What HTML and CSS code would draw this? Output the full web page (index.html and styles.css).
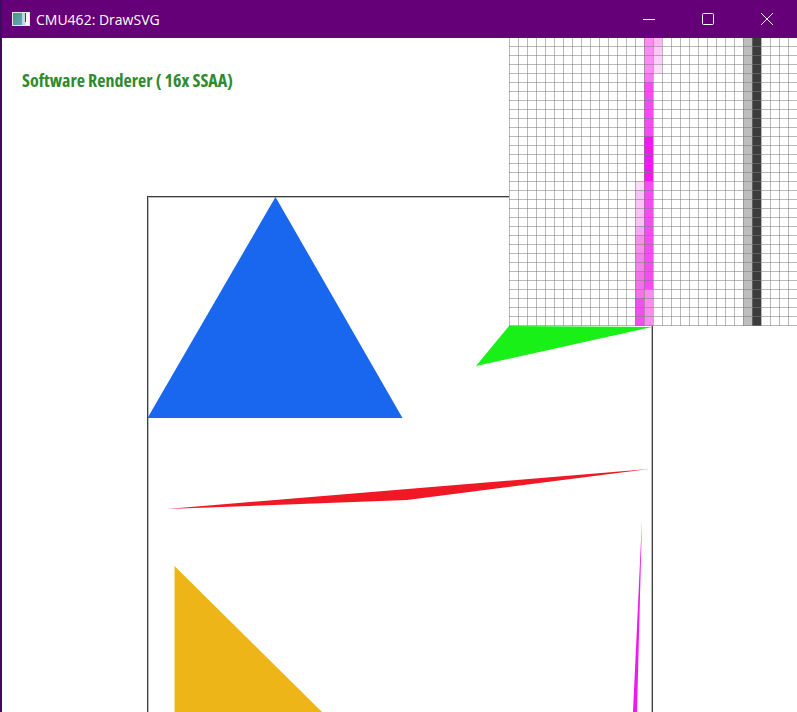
FILE: index.html
```html
<!DOCTYPE html>
<html lang="en">
<head>
<meta charset="utf-8">
<title>CMU462: DrawSVG</title>
<link rel="stylesheet" href="styles.css">
</head>
<body>
<div class="window">
  <header class="titlebar">
    <svg class="app-icon" width="18" height="14" viewBox="0 0 18 14">
      <defs>
        <linearGradient id="teal" x1="0" y1="0" x2="1" y2="1">
          <stop offset="0" stop-color="#3f9a7c"/>
          <stop offset="1" stop-color="#6aa4c4"/>
        </linearGradient>
      </defs>
      <rect x="0" y="0" width="18" height="14" fill="#e4e8ee"/>
      <rect x="1" y="1" width="9" height="12" fill="url(#teal)"/>
      <rect x="10" y="1" width="3" height="12" fill="#c4d6dc"/>
      <rect x="13" y="1" width="1" height="9" fill="#2c4c58"/>
      <rect x="14" y="1" width="3" height="12" fill="#f6f6f8"/>
    </svg>
    <span class="title">CMU462: DrawSVG</span>
    <div class="controls">
      <button class="ctl"><svg width="12" height="12" viewBox="0 0 12 12"><path d="M0 6.5H12" stroke="#fff" fill="none"/></svg></button>
      <button class="ctl"><svg width="12" height="12" viewBox="0 0 12 12"><rect x="0.5" y="0.5" width="11" height="11" rx="1" stroke="#fff" fill="none"/></svg></button>
      <button class="ctl"><svg width="12" height="12" viewBox="0 0 12 12"><path d="M0 0L12 12M12 0L0 12" stroke="#fff" fill="none"/></svg></button>
    </div>
  </header>
  <main class="canvas">
    <svg class="scene" width="795" height="674" viewBox="2 38 795 674">
      <rect x="147.5" y="196.5" width="505" height="540" fill="#fff" stroke="#3c3c3c" stroke-width="1"/>
      <rect x="148.5" y="197.5" width="503" height="538" fill="none" stroke="#bdbdbd" stroke-width="1"/>
      <polygon points="275.5,197 147.5,418 402.5,418" fill="#1967ee"/>
      <polygon points="509,326 652,327 476,366" fill="#18f018"/>
      <polygon points="167,509 649,469 407,500" fill="#f01824"/>
      <polygon points="642,519 633,712 637,712" fill="#f018ee"/>
      <polygon points="174.5,566 174.5,712 322,712" fill="#eeb518"/>
    </svg>
    <p class="label">Software Renderer ( 16x SSAA)</p>
    <div class="zoom">
      <svg class="pixels" width="288" height="288" viewBox="509 38 288 288">
        <rect x="509" y="38" width="288" height="288" fill="#fff"/>
        <rect x="743" y="38" width="9" height="288" fill="#bdbdbd"/>
        <rect x="752" y="38" width="9" height="288" fill="#3c3c3c"/>
        <rect x="653" y="37" width="9" height="9" fill="#fbb8f5"/>
        <rect x="653" y="46" width="9" height="9" fill="#fcc8f7"/>
        <rect x="653" y="55" width="9" height="9" fill="#fcd0f8"/>
        <rect x="653" y="64" width="9" height="9" fill="#fddcfb"/>
        <rect x="644" y="37" width="9" height="36" fill="#f98cf0"/>
        <rect x="644" y="73" width="9" height="9" fill="#f878ee"/>
        <rect x="644" y="82" width="9" height="54" fill="#f54cf0"/>
        <rect x="644" y="136" width="9" height="45" fill="#f018ee"/>
        <rect x="644" y="181" width="9" height="108" fill="#f54cf0"/>
        <rect x="644" y="289" width="9" height="37" fill="#f78eef"/>
        <rect x="635" y="181" width="9" height="9" fill="#fcdcf9"/>
        <rect x="635" y="190" width="9" height="36" fill="#fbc4f6"/>
        <rect x="635" y="226" width="9" height="9" fill="#fba8f3"/>
        <rect x="635" y="235" width="9" height="18" fill="#f98ef0"/>
        <rect x="635" y="253" width="9" height="18" fill="#f880ee"/>
        <rect x="635" y="271" width="9" height="27" fill="#f670ee"/>
        <rect x="635" y="298" width="9" height="28" fill="#f44cf0"/>
      </svg>
      <div class="grid"></div>
    </div>
  </main>
</div>
</body>
</html>
```
FILE: styles.css
```css
html, body {
  margin: 0;
  height: 100%;
  overflow: hidden;
  background: #fff;
}
.window {
  width: 797px;
  height: 712px;
  display: flex;
  flex-direction: column;
  border-left: 2px solid #3f0a60;
  box-sizing: border-box;
}
.titlebar {
  height: 38px;
  flex: none;
  background: #660078;
  display: flex;
  align-items: center;
  padding-left: 10px;
  gap: 6px;
  font: 14px "Open Sans", "Noto Sans", sans-serif;
  color: #fff;
}
.app-icon {
  flex: none;
}
.title {
  flex: 1;
}
.controls {
  display: flex;
  margin-right: 1px;
}
.ctl {
  width: 59px;
  height: 38px;
  border: 0;
  padding: 0;
  background: none;
  display: flex;
  align-items: center;
  justify-content: center;
}
.canvas {
  position: relative;
  flex: 1;
  overflow: hidden;
  background: #fff;
}
.scene {
  position: absolute;
  left: 0;
  top: 0;
}
.label {
  position: absolute;
  left: 20px;
  top: 30px;
  margin: 0;
  font: 700 18px/24px "Open Sans", sans-serif;
  font-stretch: condensed;
  color: #2e8b2e;
}
.zoom {
  position: absolute;
  left: 507px;
  top: 0;
  width: 288px;
  height: 288px;
}
.pixels {
  display: block;
}
.grid {
  position: absolute;
  inset: 0;
  background-image:
    linear-gradient(to right, rgba(127, 127, 127, 0.55) 1px, transparent 1px),
    linear-gradient(to bottom, rgba(127, 127, 127, 0.55) 1px, transparent 1px);
  background-size: 9px 9px;
  background-position: 0 0, 0 8px;
}
```
